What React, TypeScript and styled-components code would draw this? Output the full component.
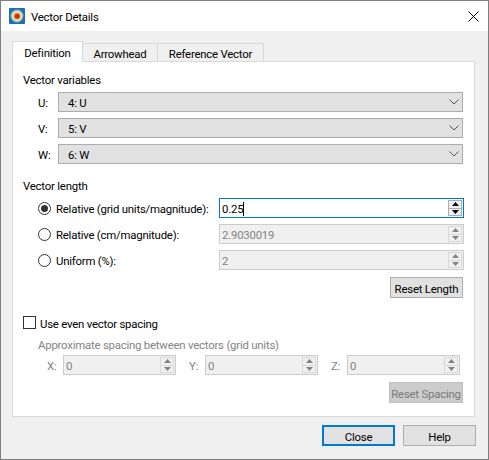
import React from "react";
import styled, { createGlobalStyle } from "styled-components";

const Global = createGlobalStyle`
    html, body {
        margin: 0;
        padding: 0;
        background: #ffffff;
    }
    * {
        box-sizing: border-box;
    }
`;

const Window = styled.div`
    width: 489px;
    height: 460px;
    display: flex;
    flex-direction: column;
    background: #f0f0f0;
    border: 1px solid #7f7f7f;
    font-family: Roboto, "Open Sans", sans-serif;
    font-size: 11.4px;
    letter-spacing: -0.22px;
    color: #000000;
    white-space: nowrap;
`;

const Text = styled.span`
    display: block;
    padding-top: 2px;
`;

const TitleBar = styled.div`
    height: 30px;
    flex: none;
    background: #ffffff;
    display: flex;
    align-items: center;
    padding-left: 8px;
    gap: 6px;
`;

const CloseX = styled.svg`
    margin-left: auto;
    margin-right: 9px;
`;

const Body = styled.div`
    flex: 1;
    display: flex;
    flex-direction: column;
    padding: 10px 12px 0 11px;
`;

const TabBar = styled.div`
    display: flex;
    height: 21px;
    flex: none;
    align-items: flex-end;
    position: relative;
    z-index: 1;
    margin-bottom: -1px;
`;

const Tab = styled.div<{ $active?: boolean; $width: number }>`
    width: ${(p) => p.$width}px;
    height: ${(p) => (p.$active ? "21px" : "19px")};
    display: flex;
    align-items: center;
    justify-content: center;
    background: ${(p) => (p.$active ? "#ffffff" : "#f0f0f0")};
    border: 1px solid #d9d9d9;
    border-left-width: ${(p) => (p.$active ? "1px" : "0")};
    border-bottom-color: ${(p) => (p.$active ? "#ffffff" : "#d9d9d9")};
`;

const Pane = styled.div`
    width: 463px;
    height: 356px;
    flex: none;
    background: #ffffff;
    border: 1px solid #d9d9d9;
    padding: 8px 10px 0 10px;
    display: flex;
    flex-direction: column;
`;

const GroupLabel = styled.div`
    height: 17px;
    line-height: 17px;
`;

const ComboList = styled.div`
    display: flex;
    flex-direction: column;
    gap: 6px;
    margin-top: 5px;
    padding-left: 15px;
`;

const ComboRow = styled.div`
    display: flex;
    align-items: center;
    height: 20px;
`;

const ComboLabel = styled(Text)`
    width: 20px;
    flex: none;
`;

const Combo = styled.div`
    width: 405px;
    height: 20px;
    background: #e1e1e1;
    border: 1px solid #adadad;
    display: flex;
    align-items: center;
    justify-content: space-between;
    padding: 0 3px 0 9px;
`;

const LengthSection = styled.div`
    margin-top: 14px;
`;

const RadioList = styled.div`
    display: flex;
    flex-direction: column;
    gap: 6px;
    margin-top: 3px;
    padding-left: 15px;
`;

const RadioRow = styled.div`
    display: flex;
    align-items: center;
    height: 20px;
`;

const RadioDot = styled.span<{ $on?: boolean }>`
    width: 13px;
    height: 13px;
    flex: none;
    border-radius: 50%;
    border: 1px solid #333333;
    background: #ffffff;
    display: flex;
    align-items: center;
    justify-content: center;
    margin-right: 5px;

    &::after {
        content: "";
        display: ${(p) => (p.$on ? "block" : "none")};
        width: 7px;
        height: 7px;
        border-radius: 50%;
        background: #333333;
    }
`;

const RadioLabel = styled(Text)`
    width: 163px;
    flex: none;
`;

const SpinBox = styled.div<{ $focused?: boolean; $width: number }>`
    width: ${(p) => p.$width}px;
    height: 20px;
    flex: none;
    display: flex;
    align-items: center;
    justify-content: space-between;
    padding: 0 1px 0 2px;
    border: 1px solid ${(p) => (p.$focused ? "#0078d7" : "#cccccc")};
    background: ${(p) => (p.$focused ? "#ffffff" : "#f0f0f0")};
    color: ${(p) => (p.$focused ? "#000000" : "#838383")};
`;

const Caret = styled.span`
    display: inline-block;
    width: 1px;
    height: 14px;
    background: #000000;
    vertical-align: -3px;
`;

const SpinButtons = styled.div`
    width: 14px;
    height: 16px;
    flex: none;
    display: flex;
    flex-direction: column;
`;

const SpinStep = styled.div<{ $focused?: boolean }>`
    flex: 1;
    display: flex;
    align-items: center;
    justify-content: center;
    background: #f0f0f0;
    border: 1px solid ${(p) => (p.$focused ? "#adadad" : "#d9d9d9")};

    & + & {
        border-top: 0;
    }
`;

const ButtonRow = styled.div`
    display: flex;
    justify-content: flex-end;
    margin-top: 7px;
    padding-right: 1px;
`;

const Button = styled.div<{ $disabled?: boolean; $default?: boolean; $width?: number }>`
    width: ${(p) => p.$width ?? 73}px;
    height: 21px;
    display: flex;
    align-items: center;
    justify-content: center;
    background: ${(p) => (p.$disabled ? "#cccccc" : "#e1e1e1")};
    color: ${(p) => (p.$disabled ? "#7a7a7a" : "#000000")};
    border: ${(p) =>
        p.$default ? "2px solid #0078d7" : p.$disabled ? "1px solid #bfbfbf" : "1px solid #adadad"};
`;

const CheckRow = styled.div`
    display: flex;
    align-items: center;
    height: 17px;
    margin-top: 16px;
    gap: 4px;
`;

const CheckBox = styled.span`
    width: 13px;
    height: 13px;
    flex: none;
    border: 1px solid #333333;
    background: #ffffff;
`;

const DisabledLabel = styled(GroupLabel)`
    color: #838383;
    margin-top: 4px;
    padding-left: 15px;
`;

const AxisRow = styled.div`
    display: flex;
    align-items: center;
    margin-top: 3px;
    padding-left: 15px;
    color: #838383;
`;

const AxisItem = styled.div`
    display: flex;
    align-items: center;
    width: 144px;
    padding-left: 9px;
`;

const AxisLabel = styled(Text)`
    width: 16px;
    flex: none;
`;

const Footer = styled.div`
    display: flex;
    justify-content: flex-end;
    gap: 8px;
    margin-top: 8px;
`;

const Spin = ({ value, focused, width }: { value: React.ReactNode; focused?: boolean; width: number }) => {
    const fill = focused ? "#000000" : "#838383";
    return (
        <SpinBox $focused={focused} $width={width}>
            <Text>{value}</Text>
            <SpinButtons>
                <SpinStep $focused={focused}>
                    <svg width="7" height="4" viewBox="0 0 7 4">
                        <path d="M3.5 0 L7 4 H0 Z" fill={fill} />
                    </svg>
                </SpinStep>
                <SpinStep $focused={focused}>
                    <svg width="7" height="4" viewBox="0 0 7 4">
                        <path d="M0 0 H7 L3.5 4 Z" fill={fill} />
                    </svg>
                </SpinStep>
            </SpinButtons>
        </SpinBox>
    );
};

const Chevron = () => (
    <svg width="10" height="6" viewBox="0 0 10 6" fill="none">
        <path d="M0.5 0.5 L5 5 L9.5 0.5" stroke="#555555" strokeWidth="1" />
    </svg>
);

const Logo = () => (
    <svg width="16" height="16" viewBox="0 0 16 16">
        <rect width="16" height="16" rx="1" fill="#1c6fb5" />
        <circle cx="8" cy="8" r="6.4" fill="#8fc3c9" />
        <circle cx="8" cy="8" r="5" fill="#efe9b8" />
        <circle cx="8" cy="8" r="3.6" fill="#f0a93a" />
        <circle cx="8.2" cy="8.3" r="2.5" fill="#d42a1e" />
    </svg>
);

const App: React.FC = () => {
    return (
        <Window>
            <Global />
            <TitleBar>
                <Logo />
                <Text>Vector Details</Text>
                <CloseX width="11" height="11" viewBox="0 0 11 11" fill="none">
                    <path d="M0.5 0.5 L10.5 10.5 M10.5 0.5 L0.5 10.5" stroke="#000000" strokeWidth="1" />
                </CloseX>
            </TitleBar>
            <Body>
                <TabBar>
                    <Tab $active $width={71}><Text>Definition</Text></Tab>
                    <Tab $width={75}><Text>Arrowhead</Text></Tab>
                    <Tab $width={106}><Text>Reference Vector</Text></Tab>
                </TabBar>
                <Pane>
                    <GroupLabel><Text>Vector variables</Text></GroupLabel>
                    <ComboList>
                        {["U|4: U", "V|5: V", "W|6: W"].map((item) => {
                            const [label, value] = item.split("|");
                            return (
                                <ComboRow key={label}>
                                    <ComboLabel>{label}:</ComboLabel>
                                    <Combo>
                                        <Text>{value}</Text>
                                        <Chevron />
                                    </Combo>
                                </ComboRow>
                            );
                        })}
                    </ComboList>
                    <LengthSection>
                        <GroupLabel>Vector length</GroupLabel>
                        <RadioList>
                            <RadioRow>
                                <RadioDot $on />
                                <RadioLabel>Relative (grid units/magnitude):</RadioLabel>
                                <Spin width={245} focused value={<>0.25<Caret /></>} />
                            </RadioRow>
                            <RadioRow>
                                <RadioDot />
                                <RadioLabel>Relative (cm/magnitude):</RadioLabel>
                                <Spin width={245} value="2.9030019" />
                            </RadioRow>
                            <RadioRow>
                                <RadioDot />
                                <RadioLabel>Uniform (%):</RadioLabel>
                                <Spin width={245} value="2" />
                            </RadioRow>
                        </RadioList>
                        <ButtonRow>
                            <Button><Text>Reset Length</Text></Button>
                        </ButtonRow>
                    </LengthSection>
                    <CheckRow>
                        <CheckBox />
                        <Text>Use even vector spacing</Text>
                    </CheckRow>
                    <DisabledLabel><Text>Approximate spacing between vectors (grid units)</Text></DisabledLabel>
                    <AxisRow>
                        {["X", "Y", "Z"].map((axis) => (
                            <AxisItem key={axis}>
                                <AxisLabel>{axis}:</AxisLabel>
                                <Spin width={113} value="0" />
                            </AxisItem>
                        ))}
                    </AxisRow>
                    <ButtonRow>
                        <Button $disabled $width={74}><Text>Reset Spacing</Text></Button>
                    </ButtonRow>
                </Pane>
                <Footer>
                    <Button $default><Text>Close</Text></Button>
                    <Button><Text>Help</Text></Button>
                </Footer>
            </Body>
        </Window>
    );
};

export default App;
